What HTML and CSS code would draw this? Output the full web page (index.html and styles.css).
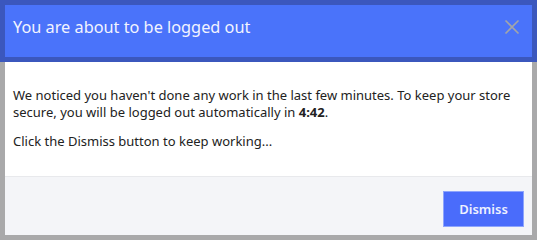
FILE: index.html
```html
<!DOCTYPE html>
<html>
<head>
<meta charset="utf-8">
<link rel="stylesheet" href="styles.css">
</head>
<body>
<div class="modal">
  <div class="modal-header">
    <h1 class="modal-title">You are about to be logged out</h1>
    <span class="modal-close">
      <svg width="16" height="16" viewBox="0 0 16 16"><path d="M1.5 1.5 L14.5 14.5 M14.5 1.5 L1.5 14.5" stroke="#a3a6a8" stroke-width="1.6" fill="none"/></svg>
    </span>
  </div>
  <div class="modal-body">
    <p>We noticed you haven't done any work in the last few minutes. To keep your store secure, you will be logged out automatically in <strong>4:42</strong>.</p>
    <p>Click the Dismiss button to keep working...</p>
  </div>
  <div class="modal-footer">
    <button class="btn-primary">Dismiss</button>
  </div>
</div>
</body>
</html>
```
FILE: styles.css
```css
html, body {
  margin: 0;
  padding: 0;
}
body {
  background: #a9a9aa;
  padding: 5px;
  height: 240px;
  box-sizing: border-box;
  font-family: "Noto Sans", "Open Sans", sans-serif;
}
.modal {
  width: 527px;
  height: 230px;
  display: flex;
  flex-direction: column;
  background: #fff;
}
.modal-header {
  height: 52px;
  box-sizing: border-box;
  background: #4a73fa;
  box-shadow: 0 0 0 5px #3b57bd;
  display: flex;
  align-items: flex-start;
  justify-content: space-between;
  padding: 11px 12px 0 8px;
  flex-shrink: 0;
}
.modal-title {
  margin: 0;
  font-size: 16.3px;
  line-height: 22px;
  font-weight: 400;
  color: #f2f4ff;
}
.modal-close {
  display: flex;
  padding-top: 3px;
}
.modal-body {
  flex: 1;
  padding: 30px 8px 0 8px;
  border-bottom: 1px solid #e8e9ec;
  font-size: 13px;
  line-height: 17px;
  color: #222;
}
.modal-body p {
  margin: 0 0 12px 0;
}
.modal-footer {
  height: 58px;
  background: #f4f5f8;
  display: flex;
  justify-content: flex-end;
  align-items: flex-start;
  padding: 14px 8px 0 0;
  box-sizing: border-box;
  flex-shrink: 0;
}
.btn-primary {
  width: 81px;
  height: 36px;
  background: #4a6cfb;
  border: 1px solid #8ea5fc;
  color: #eef1ff;
  font-family: inherit;
  font-size: 13px;
  font-weight: 600;
  cursor: pointer;
}
```
